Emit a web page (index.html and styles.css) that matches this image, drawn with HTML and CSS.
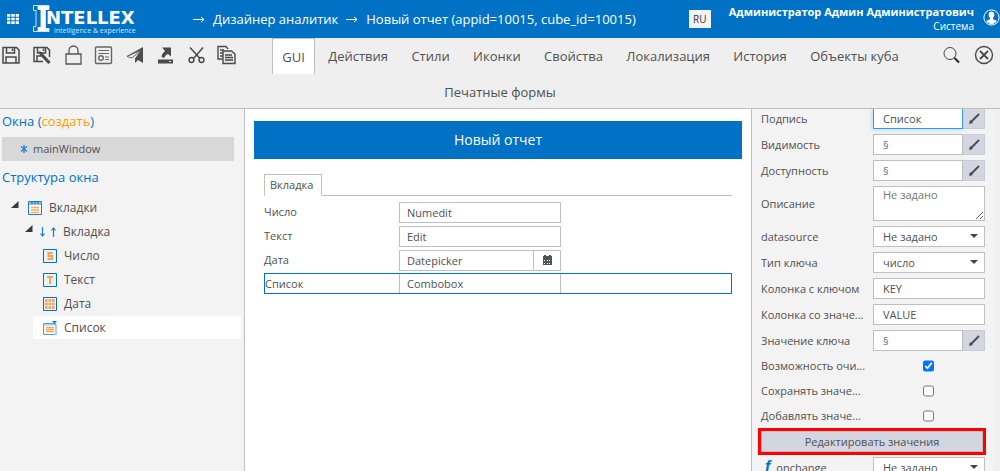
FILE: index.html
```html
<!DOCTYPE html>
<html lang="ru">
<head>
<meta charset="utf-8">
<title>Дизайнер аналитик</title>
<link rel="stylesheet" href="styles.css">
</head>
<body>
<svg width="0" height="0" class="defs" aria-hidden="true">
  <symbol id="pen" viewBox="0 0 12 12"><path d="M11 1 3 9" stroke="#444b55" stroke-width="1.800"/><path d="M1 11l1-4 3 3z" fill="#444b55"/></symbol>
  <symbol id="caret" viewBox="0 0 8 4"><path d="M0 0h8L4 4z" fill="#444"/></symbol>
  <symbol id="twisty" viewBox="0 0 8 8"><path d="M7.500 0v7H0z" fill="#3a3a3a"/></symbol>
</svg>
<header class="topbar">
  <button class="plain apps" aria-label="Приложения">
    <svg width="12" height="10" fill="#fff"><path d="M0 0h3.300v2.700H0zM4.300 0h3.400v2.700H4.300zM8.700 0H12v2.700H8.700zM0 3.700h3.300v2.600H0zM4.300 3.700h3.400v2.600H4.300zM8.700 3.700H12v2.600H8.700zM0 7.300h3.300V10H0zM4.300 7.300h3.400V10H4.300zM8.700 7.300H12V10H8.700z"/></svg>
  </button>
  <div class="logo">
    <svg width="17" height="28" viewBox="0 0 17 28" aria-label="I"><path d="M5 .5H.5v5H3v16H.5v5H16M5 .5h11v4h-3.500v19H16v3H5v-4h3V4.500H5z" fill="none" stroke="#cfe5f7"/><path d="M5 1h11v4h-4v18h4v3H5v-4h3V5H5z" fill="#fff"/></svg>
    <div class="logo-words"><b>NTELLEX</b><small>intelligence &amp; experience</small></div>
  </div>
  <nav class="crumbs">
    <svg width="12" height="7" class="arrow"><path d="M0 3.500h11M8 1l3 2.500L8 6" fill="none" stroke="#fff"/></svg>
    <a href="#">Дизайнер аналитик</a>
    <svg width="12" height="7" class="arrow"><path d="M0 3.500h11M8 1l3 2.500L8 6" fill="none" stroke="#fff"/></svg>
    <a href="#">Новый отчет (appid=10015, cube_id=10015)</a>
  </nav>
  <button class="plain lang">RU</button>
  <div class="user"><b>Администратор Админ Администратович</b><span>Система</span></div>
  <button class="plain avatar" aria-label="Профиль">
    <svg width="17" height="17" viewBox="0 0 17 17"><circle cx="8.500" cy="8.500" r="7.600" fill="none" stroke="#fff"/><path d="M8.500 2.500c2 0 2.900 1.300 2.800 3.200 0 1.500-.7 2.500-1.300 3.200v1.400c1.500.6 3 .9 3.700 2A7 7 0 0 1 8.500 15.500 7 7 0 0 1 3.300 12.300c.7-1.100 2.200-1.400 3.700-2V8.900C6.400 8.200 5.700 7.200 5.700 5.700c-.1-1.900.8-3.200 2.800-3.200z" fill="#fff"/></svg>
  </button>
</header>

<div class="toolbar">
  <div class="tools">
    <button class="plain" aria-label="Сохранить"><svg viewBox="0 0 20 20" fill="none" stroke="#4a4a4a" stroke-width="1.500"><path d="M2 2.500h13.500L18 5v13H2zM5.500 2.500V8h8V2.500M5 18v-6h10v6"/><path d="M11.500 3.500v2.500"/></svg></button>
    <button class="plain" aria-label="Сохранить как"><svg viewBox="0 0 20 20" fill="none" stroke="#4a4a4a" stroke-width="1.500"><path d="M11 16.500H2V2.500h13L17.500 5v7M5.500 2.500V8h8V2.500M5 16v-5h4"/><path d="M11.500 3.500v2.500"/><path d="M8.500 8.500 17.500 18" stroke-width="3.200"/><path d="M7 7l3 1"/></svg></button>
    <button class="plain" aria-label="Заблокировать"><svg viewBox="0 0 20 20" fill="none" stroke="#555" stroke-width="1.300"><path d="M3 9h15v10H3zM6 9V5.500C6 3 8 1 10.500 1S15 3 15 5.500V9"/></svg></button>
    <button class="plain" aria-label="Отчет"><svg viewBox="0 0 20 20" fill="none" stroke="#666" stroke-width="1.400"><rect x="2.500" y="2" width="16" height="16.500" rx="1"/><path d="M5.500 5.500h10.500M5.500 8.500h10.500M12 12h4M12 14.500h4" stroke-width="1"/><circle cx="8" cy="13" r="2.300"/></svg></button>
    <button class="plain" aria-label="Отправить"><svg viewBox="0 0 20 20"><path d="M19 2v16l-5-3-3 3v-4.500L17 5 8 13l-5-2z" fill="#4d4d4d"/><path d="M17 5 8 13l-5-1.500z" fill="#efefef" stroke="#4d4d4d" stroke-width=".8"/></svg></button>
    <button class="plain" aria-label="Выгрузить"><svg viewBox="0 0 20 20" fill="#4a4a4a"><path d="M7 2.500h9v9l-3-2.500c-2 .8-3 2-4 4l-2.500-1c.2-2.500 1.500-4 3.500-6zM3 14.500h15v4H3z"/><path d="M14 16.500h2" stroke="#eee"/></svg></button>
    <button class="plain" aria-label="Вырезать"><svg viewBox="0 0 20 20" fill="none" stroke="#4a4a4a" stroke-width="1.500"><path d="M4 2.500 14 13.500M17 2.500 8 13"/><circle cx="5.500" cy="15" r="2.400"/><circle cx="15.500" cy="15" r="2.400"/></svg></button>
    <button class="plain" aria-label="Копировать"><svg viewBox="0 0 20 20" fill="none" stroke="#4a4a4a" stroke-width="1.400"><path d="M6.500 14H2V1.500h8l2 2.500M4 5h4M4 8h3M4 11h3"/><path d="M7 6h8.500l3.500 3v9.500H7z" fill="#e8e8e8"/><path d="M9 10h7M9 12.500h8M9 15h8" stroke-width="1.500"/></svg></button>
  </div>
  <div class="actions">
    <button class="plain" aria-label="Поиск"><svg viewBox="0 0 20 20" fill="none" stroke="#444"><circle cx="9" cy="8.500" r="6"/><path d="m13.500 13 4.500 4.500" stroke-width="2" stroke="#222"/></svg></button>
    <button class="plain" aria-label="Закрыть"><svg viewBox="0 0 20 20" fill="none" stroke="#4a4a4a" stroke-width="1.400"><circle cx="10" cy="10" r="8.500"/><path d="m6 6 8 8M14 6l-8 8" stroke-width="1.800"/></svg></button>
  </div>
  <nav class="tabs">
    <button class="tab active">GUI</button>
    <button class="tab">Действия</button>
    <button class="tab">Стили</button>
    <button class="tab">Иконки</button>
    <button class="tab">Свойства</button>
    <button class="tab">Локализация</button>
    <button class="tab">История</button>
    <button class="tab">Объекты куба</button>
    <button class="tab">Печатные формы</button>
  </nav>
</div>

<main class="work">
  <aside class="left">
    <h2>Окна (<a href="#">создать</a>)</h2>
    <a href="#" class="window"><svg width="8" height="8" stroke="#2a86d6" stroke-width="1.500"><path d="M4 0v8M1 1.500l6 5M7 1.500l-6 5"/></svg>mainWindow</a>
    <h2>Структура окна</h2>
    <ul class="tree">
      <li class="node l1"><svg width="8" height="8" class="twisty"><use href="#twisty"/></svg><svg width="14" height="14"><path d="M.5.500h13v13H.5z" fill="#fff" stroke="#1b7fd0"/><path d="M1 1h12v3H1z" fill="#8cc0ea"/><path d="M4 1v2M7 1v2M10 1v2" stroke="#1b5f9c"/><path d="M3 6.500h8M3 9h8M3 11.500h8" stroke="#fba85f" stroke-width="1.500"/></svg>Вкладки</li>
      <li class="node l2"><svg width="8" height="8" class="twisty"><use href="#twisty"/></svg><svg width="16" height="10" fill="none" stroke="#1f80d6" stroke-width="1.200"><path d="M2.500 0v9M.5 6.500l2 2.500 2-2.500M13.500 10V1M11.500 3.500l2-2.500 2 2.500"/></svg>Вкладка</li>
      <li class="node l3"><svg width="14" height="14" fill="none"><path d="M.5.500h13v13H.5z" stroke="#0072c6" fill="#e8f2fb"/><path d="M9.500 4H5.500v3h3.500v3H4.500" stroke="#fba04f" stroke-width="2"/></svg>Число</li>
      <li class="node l3"><svg width="14" height="14" fill="none"><path d="M.5.500h13v13H.5z" stroke="#0072c6" fill="#e8f2fb"/><path d="M4 4h6M7 4v7" stroke="#fba04f" stroke-width="2"/></svg>Текст</li>
      <li class="node l3"><svg width="14" height="14" fill="none"><path d="M.5.500h13v13H.5z" stroke="#0072c6" fill="#e8f2fb"/><path d="M2 3.500h10M2 7h10M2 10.500h10" stroke="#fba04f" stroke-width="2.500" stroke-dasharray="2.700 .8"/></svg>Дата</li>
      <li class="node l3 selected"><svg width="14" height="14" fill="none"><path d="M.5 2.500h12v11H.5z" stroke="#4e9cdd" fill="#fff"/><path d="M1 3h11v1.500H1zM12 4h2v10h-2z" fill="#a9cfee"/><path d="M9 0h5l-2.500 2.500z" fill="#0072c6"/><path d="M3 6.500h8M3 8.500h8M3 10.500h8" stroke="#fba85f" stroke-width="1.500"/></svg>Список</li>
    </ul>
  </aside>

  <section class="canvas">
    <h1>Новый отчет</h1>
    <div class="sheet">
      <div class="sheet-tabs"><button class="sheet-tab">Вкладка</button></div>
      <div class="row"><label for="num">Число</label><input id="num" class="field" value="Numedit"></div>
      <div class="row"><label for="txt">Текст</label><input id="txt" class="field" value="Edit"></div>
      <div class="row"><label for="dat">Дата</label><div class="combo"><input id="dat" class="field" value="Datepicker"><button class="pick" aria-label="Календарь"><svg width="9" height="10"><path d="M0 1h1V0h2v1h3V0h2v1h1v9H0z" fill="#50555a"/><path d="M1 5.500h1M4 5.500h1M6 5.500h1M1 8.500h1M4 8.500h1M6 8.500h1" stroke="#fff"/></svg></button></div></div>
      <div class="row current"><label for="lst">Список</label><input id="lst" class="field" value="Combobox"></div>
    </div>
  </section>

  <aside class="right">
    <form class="props">
      <label for="p1">Подпись</label><div class="combo"><input id="p1" class="field focus" value="Список"><button type="button" class="edit" aria-label="Изменить"><svg width="12" height="12"><use href="#pen"/></svg></button></div>
      <label for="p2">Видимость</label><div class="combo"><input id="p2" class="field" placeholder="§"><button type="button" class="edit" aria-label="Изменить"><svg width="12" height="12"><use href="#pen"/></svg></button></div>
      <label for="p3">Доступность</label><div class="combo"><input id="p3" class="field" placeholder="§"><button type="button" class="edit" aria-label="Изменить"><svg width="12" height="12"><use href="#pen"/></svg></button></div>
      <label for="p4">Описание</label><textarea id="p4" class="field" placeholder="Не задано"></textarea>
      <label for="p5">datasource</label><div class="drop"><select id="p5" class="field"><option>Не задано</option></select><svg width="8" height="4"><use href="#caret"/></svg></div>
      <label for="p6">Тип ключа</label><div class="drop"><select id="p6" class="field"><option>число</option></select><svg width="8" height="4"><use href="#caret"/></svg></div>
      <label for="p7">Колонка с ключом</label><input id="p7" class="field" value="KEY">
      <label for="p8">Колонка со значе...</label><input id="p8" class="field" value="VALUE">
      <label for="p9">Значение ключа</label><div class="combo"><input id="p9" class="field" placeholder="§"><button type="button" class="edit" aria-label="Изменить"><svg width="12" height="12"><use href="#pen"/></svg></button></div>
      <label for="c1">Возможность очи...</label><input id="c1" type="checkbox" checked>
      <label for="c2">Сохранять значе...</label><input id="c2" type="checkbox">
      <label for="c3">Добавлять значе...</label><input id="c3" type="checkbox">
      <button type="button" class="wide">Редактировать значения</button>
      <label for="p10"><i class="fn">f</i>onchange</label><div class="drop"><select id="p10" class="field"><option>Не задано</option></select><svg width="8" height="4"><use href="#caret"/></svg></div>
    </form>
  </aside>
</main>
</body>
</html>
```
FILE: styles.css
```css
* { box-sizing: border-box; }
body {
  margin: 0;
  height: 100vh;
  display: flex;
  flex-direction: column;
  overflow: hidden;
  font: 12px/16px "Open Sans", "Noto Sans", sans-serif;
  color: #505050;
  background: #fff;
}
button, input, select, textarea { font: inherit; color: inherit; margin: 0; border-radius: 0; }
h1, h2, ul { margin: 0; padding: 0; font-weight: normal; }
a { color: inherit; text-decoration: none; }
svg { flex: none; }
.defs { position: absolute; }
.plain { border: 0; padding: 0; background: none; display: block; }

.topbar {
  flex: none;
  height: 38px;
  display: flex;
  align-items: center;
  padding-left: 7px;
  background: #0072c6;
  color: #fff;
}
.apps svg { display: block; }
.logo { display: flex; align-items: center; margin-left: 14px; width: 160px; }
.logo-words { display: flex; flex-direction: column; padding-top: 4px; margin-left: -4px; }
.logo-words b { font: bold 18px/18px "DejaVu Sans", sans-serif; }
.logo-words small { font-size: 7px; line-height: 7px; padding-left: 8px; color: #cfe5f7; }
.crumbs { display: flex; align-items: center; gap: 8px; font-size: 13px; flex: 1; white-space: nowrap; }
.lang { width: 22px; height: 18px; background: #f3f3f3; color: #333; font-size: 10px; }
.user { display: flex; flex-direction: column; align-items: flex-end; margin: 0 9px 0 18px; white-space: nowrap; line-height: 14px; font-size: 11px; }
.user span { font-size: 10px; }

.toolbar { flex: none; background: #efefef; border-bottom: 1px solid #bfbfbf; }
.tools, .actions { height: 36px; display: grid; align-items: center; }
.tools { float: left; width: 247px; grid-template-columns: repeat(8, 1fr); padding: 0 0 2px 1px; }
.actions { float: right; width: 66px; grid-template-columns: 33px 20px; padding: 0 6px 2px 7px; }
.toolbar svg { width: 20px; height: 20px; display: block; }
.tabs { text-align: center; font-size: 13px; }
.tab { border: 1px solid transparent; border-bottom: 0; padding: 0 9px; height: 34px; background: none; vertical-align: top; }
.tab.active { background: #fff; border-color: #bfbfbf; height: 36px; }

.work { flex: 1; min-height: 0; display: grid; grid-template-columns: 245px 1fr 249px; }
.left { background: #f3f3f3; border-right: 1px solid #bfbfbf; padding: 3px 3px 0 2px; }
.left h2 { color: #0072c6; font-size: 13px; line-height: 18px; }
.left h2 a { color: #ffa000; }
.window { display: flex; align-items: center; gap: 5px; height: 24px; margin: 7px 7px 7px 0; padding-left: 18px; background: #d8d8d8; font-size: 11px; }
.tree { list-style: none; margin-top: 10px; }
.node { display: flex; align-items: center; gap: 7px; height: 23px; margin: 0 0 1px 31px; padding-left: 10px; }
.node.l1 { margin-left: 9px; padding-left: 0; }
.node.l2 { margin-left: 23px; padding-left: 0; }
.node .twisty { margin-top: -6px; margin-right: 2px; }
.node.l2 .twisty { margin-right: 0; }
.node.selected { background: #fff; }

.canvas { padding: 12px 9px; min-width: 0; }
h1 { background: #0072c6; color: #fff; font-size: 14px; line-height: 38px; text-align: center; }
.sheet { padding: 15px 10px; display: flex; flex-direction: column; gap: 2px; font-size: 11px; }
.sheet-tabs { border-bottom: 1px solid #bfbfbf; margin-bottom: 3px; height: 22px; }
.sheet-tab { height: 22px; padding: 0 8px 0 5px; background: #fff; border: 1px solid #bfbfbf; border-bottom-color: #fff; }
.row { display: grid; grid-template-columns: 135px 162px; height: 22px; align-items: center; }
.row.current { border: 1px solid #0072c6; height: 21px; grid-template-columns: 134px 162px; }
.field { width: 100%; min-width: 0; height: 21px; padding: 0 7px; background: #fff; border: 1px solid #bfbfbf; outline: 0; }
.row.current .field { border-width: 0 1px; height: 19px; }
.combo { display: flex; }
.pick { flex: none; width: 27px; border: 1px solid #bfbfbf; border-left: 0; background: #fff; padding: 0; }

.right { background: #f3f3f3; border-left: 1px solid #bfbfbf; border-right: 6px solid #efefef; overflow: hidden; min-width: 0; }
.props { display: grid; grid-template-columns: 105px 112px; gap: 5px 7px; padding-left: 9px; margin-top: -1px; align-items: center; font-size: 11px; }
.props label { white-space: nowrap; }
.props .field { padding: 0 9px; }
.props ::placeholder { color: #777; }
.props .focus { border-color: #2a9df4; box-shadow: 0 0 6px #a5d3f7; }
.props textarea { height: 35px; display: block; padding: 2px 9px; }
.edit { flex: none; width: 22px; border: 1px solid #c9ccd3; border-left: 0; background: #d3d6e0; padding: 0; }
.edit svg, .pick svg { display: block; margin: auto; }
.drop { position: relative; }
.drop select { appearance: none; display: block; }
.drop svg { position: absolute; right: 7px; top: 8px; }
.props [type="checkbox"] { justify-self: center; width: 11px; height: 20px; margin-right: 2px; }
.wide { grid-column: 1 / -1; height: 21px; margin-right: 2px; border: 1px solid #bfbfbf; background: #d3d6e0; outline: 3px solid #f00; font-size: 11px; }
.fn { color: #0072c6; font: italic bold 16px/16px "Liberation Sans", sans-serif; padding: 0 6px 0 4px; }
```
